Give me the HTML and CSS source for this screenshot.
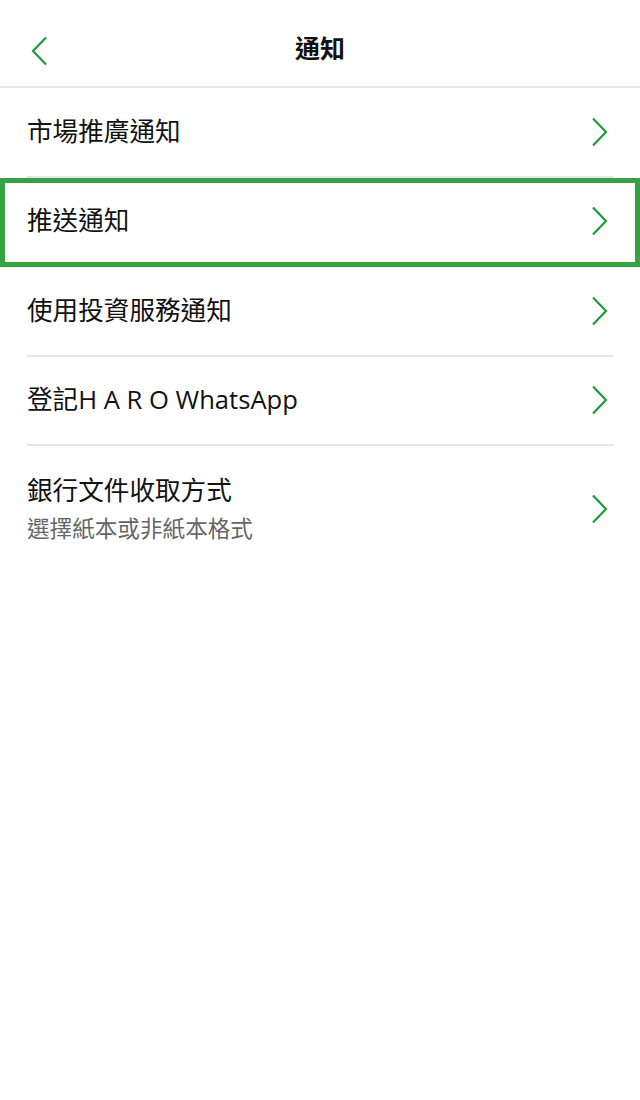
FILE: index.html
```html
<!DOCTYPE html>
<html lang="zh-Hant">

<head>
    <meta charset="UTF-8">
    <meta name="viewport" content="width=device-width, initial-scale=1.0">
    <title>通知</title>
    <link rel="stylesheet" href="styles.css">
</head>

<body>
    <header class="top-bar">
        <a class="back-btn" href="#" aria-label="返回">
            <svg width="18" height="30" viewBox="0 0 18 30">
                <path d="M15 1.5 L2 15 L15 28.5" fill="none" stroke="#1f9a3a" stroke-width="2.2" />
            </svg>
        </a>
        <h1 class="title">通知</h1>
    </header>

    <ul class="menu">
        <li class="menu-item">
            <div class="menu-inner">
                <div class="label">市場推廣通知</div>
                <svg class="arrow" width="18" height="30" viewBox="0 0 18 30">
                    <path d="M3 1.5 L16 15 L3 28.5" fill="none" stroke="#1f9a3a" stroke-width="2.2" />
                </svg>
            </div>
        </li>
        <li class="menu-item selected">
            <div class="menu-inner">
                <div class="label">推送通知</div>
                <svg class="arrow" width="18" height="30" viewBox="0 0 18 30">
                    <path d="M3 1.5 L16 15 L3 28.5" fill="none" stroke="#1f9a3a" stroke-width="2.2" />
                </svg>
            </div>
        </li>
        <li class="menu-item">
            <div class="menu-inner">
                <div class="label">使用投資服務通知</div>
                <svg class="arrow" width="18" height="30" viewBox="0 0 18 30">
                    <path d="M3 1.5 L16 15 L3 28.5" fill="none" stroke="#1f9a3a" stroke-width="2.2" />
                </svg>
            </div>
        </li>
        <li class="menu-item">
            <div class="menu-inner">
                <div class="label">登記H A R O WhatsApp</div>
                <svg class="arrow" width="18" height="30" viewBox="0 0 18 30">
                    <path d="M3 1.5 L16 15 L3 28.5" fill="none" stroke="#1f9a3a" stroke-width="2.2" />
                </svg>
            </div>
        </li>
        <li class="menu-item tall">
            <div class="menu-inner">
                <div>
                    <div class="label">銀行文件收取方式</div>
                    <div class="sub">選擇紙本或非紙本格式</div>
                </div>
                <svg class="arrow" width="18" height="30" viewBox="0 0 18 30">
                    <path d="M3 1.5 L16 15 L3 28.5" fill="none" stroke="#1f9a3a" stroke-width="2.2" />
                </svg>
            </div>
        </li>
    </ul>
</body>

</html>
```

FILE: styles.css
```css
:root {
    --green: #1f9a3a;
    --mark: #36a244;
    --line: #e6e6e6;
}

html,
body {
    margin: 0;
    background-color: #fff;
    color: #111;
    font-family: 'Open Sans', 'Noto Sans CJK TC', sans-serif;
}

.top-bar {
    height: 86px;
    border-bottom: 2px solid var(--line);
    display: flex;
    align-items: center;
    justify-content: center;
    position: relative;
}

.back-btn {
    position: absolute;
    left: 31px;
    top: 36px;
    display: flex;
}

.title {
    margin: 0;
    font-size: 25px;
    font-weight: 700;
    line-height: 1;
    margin-top: 10px;
}

.menu {
    list-style: none;
    margin: 0;
    padding: 0;
}

.menu-item {
    padding: 0 26px 0 27px;
}

.menu-inner {
    height: 87.5px;
    display: flex;
    align-items: center;
    justify-content: space-between;
    border-bottom: 2px solid var(--line);
}

.menu-item.tall .menu-inner {
    height: auto;
    padding: 27px 0 28px;
    border-bottom: none;
}

.menu-item.selected {
    outline: 5px solid var(--mark);
    outline-offset: -5px;
}

.label {
    font-size: 25.6px;
    line-height: 36px;
}

.sub {
    font-size: 22.6px;
    line-height: 30px;
    color: #666;
    margin-top: 5px;
}

.arrow {
    flex-shrink: 0;
    margin-right: 6px;
}
```
